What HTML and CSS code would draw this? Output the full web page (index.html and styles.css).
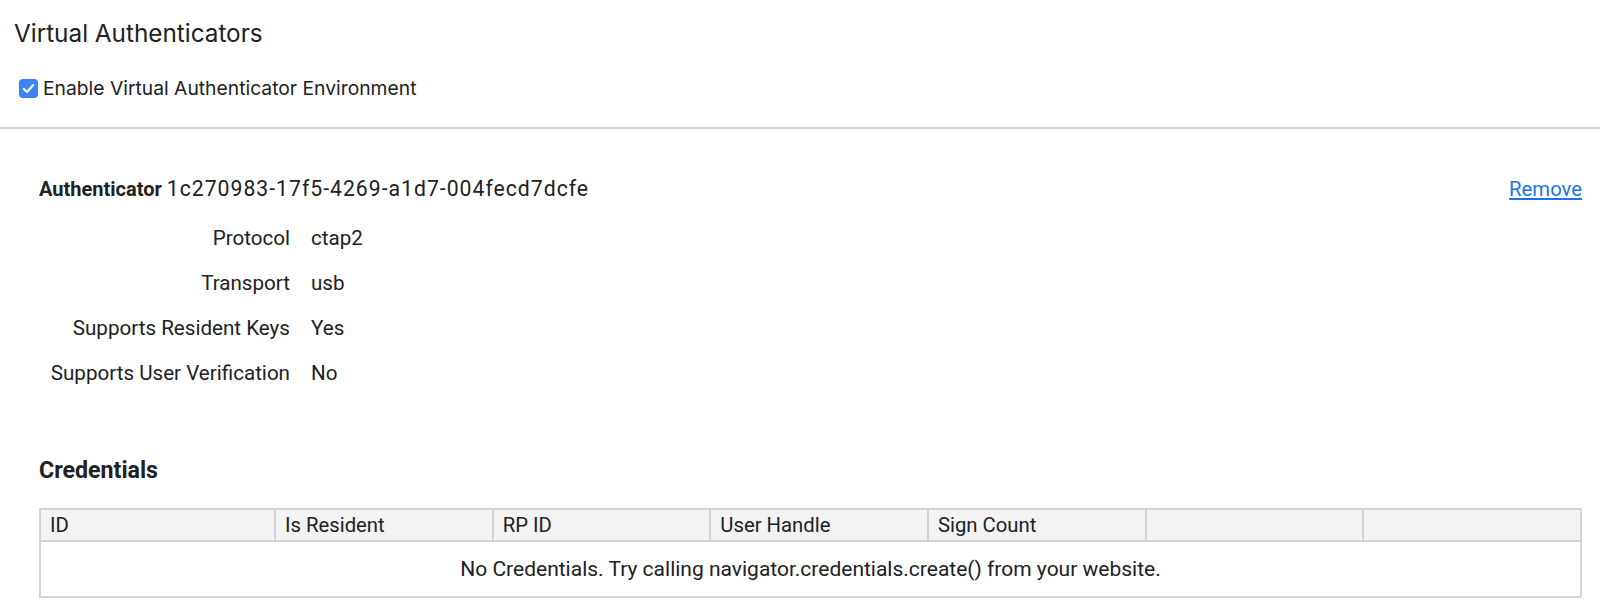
FILE: index.html
```html
<!DOCTYPE html>
<html lang="en">
<head>
<meta charset="utf-8">
<title>Virtual Authenticators</title>
<link rel="stylesheet" href="styles.css">
</head>
<body>
<section class="toolbar">
  <h1 class="title">Virtual Authenticators</h1>
  <label class="enable">
    <span class="check"><svg viewBox="0 0 20 20" width="19" height="19"><path d="M5 10.4 L8.4 13.6 L15 6.4" fill="none" stroke="#fff" stroke-width="2.2" stroke-linecap="round" stroke-linejoin="round"/></svg></span>
    <span class="enable-text">Enable Virtual Authenticator Environment</span>
  </label>
</section>
<section class="authenticator">
  <div class="auth-head">
    <div class="auth-name"><b>Authenticator</b> <span class="auth-id">1c270983-17f5-4269-a1d7-004fecd7dcfe</span></div>
    <a class="remove" href="#">Remove</a>
  </div>
  <div class="props">
    <div class="prop-label">Protocol</div><div class="prop-value">ctap2</div>
    <div class="prop-label">Transport</div><div class="prop-value">usb</div>
    <div class="prop-label">Supports Resident Keys</div><div class="prop-value">Yes</div>
    <div class="prop-label">Supports User Verification</div><div class="prop-value">No</div>
  </div>
  <h2 class="cred-title">Credentials</h2>
  <table class="creds">
    <colgroup><col class="c-first"><col><col><col><col><col><col></colgroup>
    <thead>
      <tr><th>ID</th><th>Is Resident</th><th>RP ID</th><th>User Handle</th><th>Sign Count</th><th></th><th></th></tr>
    </thead>
    <tbody>
      <tr><td colspan="7" class="empty">No Credentials. Try calling navigator.credentials.create() from your website.</td></tr>
    </tbody>
  </table>
</section>
</body>
</html>
```
FILE: styles.css
```css
html, body {
  margin: 0;
  padding: 0;
  background: #ffffff;
}
body {
  font-family: Roboto, "Liberation Sans", sans-serif;
  color: #202124;
}
.toolbar {
  padding: 20px 14px 0 14px;
  height: 107px;
  border-bottom: 2px solid #d4d4d4;
}
.title {
  margin: 0;
  font-family: Inter, "Noto Sans", sans-serif;
  font-weight: 400;
  font-size: 24.3px;
  line-height: 26px;
  color: #202124;
}
.enable {
  margin-top: 32px;
  margin-left: 5px;
  display: flex;
  align-items: center;
  gap: 5px;
  height: 20px;
}
.check {
  width: 19px;
  height: 19px;
  border-radius: 4px;
  background: #3c84f4;
  display: flex;
}
.enable-text {
  font-family: Inter, "Noto Sans", sans-serif;
  font-size: 19.3px;
  line-height: 20px;
  color: #202124;
}
.authenticator {
  padding: 48px 18px 0 39px;
}
.auth-head {
  display: flex;
  justify-content: space-between;
  align-items: center;
  height: 24px;
}
.auth-name {
  font-size: 20px;
  line-height: 24px;
}
.auth-name b {
  font-weight: 700;
}
.auth-id {
  font-size: 21.2px;
  letter-spacing: 1px;
}
.remove {
  font-size: 20.3px;
  color: #1a73e8;
  text-decoration: underline;
}
.props {
  margin-top: 14px;
  display: grid;
  grid-template-columns: 251px auto;
  grid-auto-rows: 45px;
  column-gap: 21px;
  align-items: center;
  font-size: 20.6px;
}
.prop-label {
  text-align: right;
}
.cred-title {
  margin: 61px 0 0 0;
  font-size: 23.2px;
  line-height: 28px;
  font-weight: 700;
}
.creds {
  margin-top: 24px;
  width: 1543px;
  table-layout: fixed;
  border-collapse: collapse;
  font-size: 20.3px;
}
.c-first {
  width: 235px;
}
.creds th {
  background: #f3f3f3;
  border: 2px solid #d4d4d4;
  height: 30px;
  padding: 0 9px;
  text-align: left;
  font-weight: 400;
}
.creds td {
  border: 2px solid #d4d4d4;
  height: 54px;
  padding: 0;
}
.empty {
  text-align: center;
  font-size: 21px;
}
```
